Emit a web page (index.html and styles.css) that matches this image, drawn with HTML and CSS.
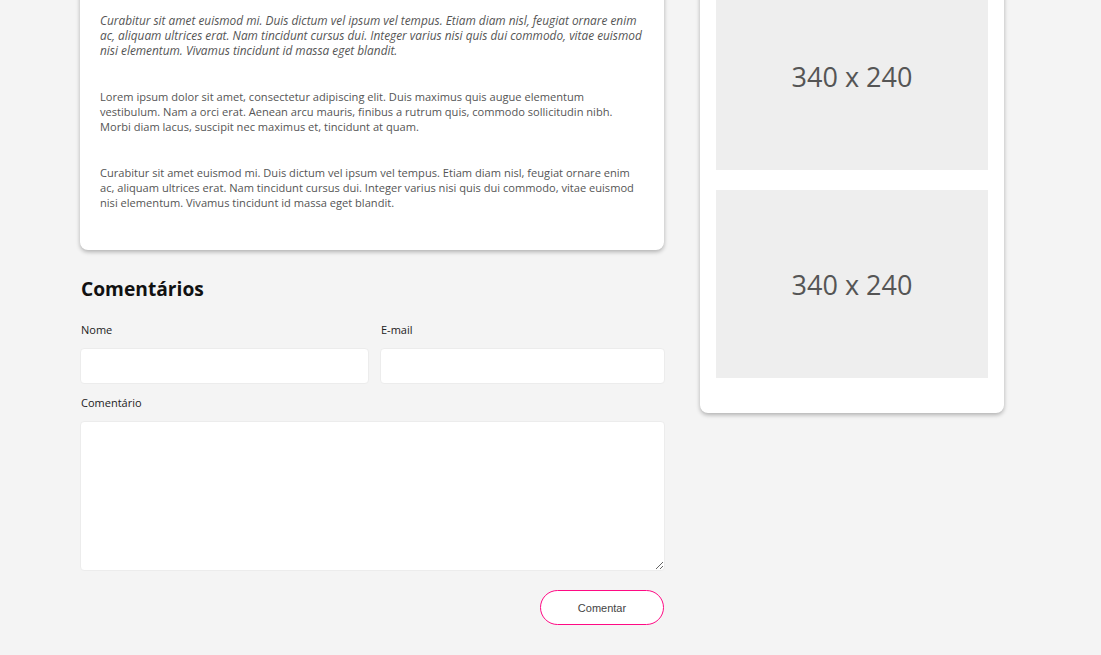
FILE: index.html
```html
<!DOCTYPE html>
<html lang="pt-BR">
<head>
<meta charset="utf-8">
<title>Post</title>
<link rel="stylesheet" href="styles.css">
</head>
<body>
<div class="page">
  <main class="main">
    <article class="card post">
      <p class="italic">Curabitur sit amet euismod mi. Duis dictum vel ipsum vel tempus. Etiam diam nisl, feugiat ornare enim ac, aliquam ultrices erat. Nam tincidunt cursus dui. Integer varius nisi quis dui commodo, vitae euismod nisi elementum. Vivamus tincidunt id massa eget blandit.</p>
      <p>Lorem ipsum dolor sit amet, consectetur adipiscing elit. Duis maximus quis augue elementum vestibulum. Nam a orci erat. Aenean arcu mauris, finibus a rutrum quis, commodo sollicitudin nibh. Morbi diam lacus, suscipit nec maximus et, tincidunt at quam.</p>
      <p>Curabitur sit amet euismod mi. Duis dictum vel ipsum vel tempus. Etiam diam nisl, feugiat ornare enim ac, aliquam ultrices erat. Nam tincidunt cursus dui. Integer varius nisi quis dui commodo, vitae euismod nisi elementum. Vivamus tincidunt id massa eget blandit.</p>
    </article>
    <section class="comments">
      <h2 class="comments-title">Comentários</h2>
      <form class="form">
        <div class="row">
          <label class="field">
            <span class="label">Nome</span>
            <input class="input" type="text">
          </label>
          <label class="field">
            <span class="label">E-mail</span>
            <input class="input" type="email">
          </label>
        </div>
        <label class="field">
          <span class="label">Comentário</span>
          <textarea class="input textarea"></textarea>
        </label>
        <div class="actions">
          <button class="btn" type="button">Comentar</button>
        </div>
      </form>
    </section>
  </main>
  <aside class="side">
    <div class="card ads">
      <div class="ph">340 x 240</div>
      <div class="ph">340 x 240</div>
    </div>
  </aside>
</div>
</body>
</html>
```
FILE: styles.css
```css
* { box-sizing: border-box; }
html, body { margin: 0; padding: 0; }
body {
  background: #f4f4f4;
  font-family: "Open Sans", "Liberation Sans", sans-serif;
  color: #555;
  overflow: hidden;
}
.page {
  display: flex;
  align-items: flex-start;
  gap: 35px;
  padding-left: 80px;
  margin-top: -60px;
}
.main {
  width: 585px;
  display: flex;
  flex-direction: column;
}
.card {
  background: #fff;
  border-radius: 8px;
  box-shadow: 0 2px 4px rgba(0,0,0,0.28);
}
.post {
  width: 584px;
  padding: 73px 20px 40px 20px;
  display: flex;
  flex-direction: column;
  gap: 31px;
}
.post p {
  margin: 0;
  font-size: 11.1px;
  line-height: 15px;
  color: #555;
}
.post .italic {
  font-style: italic;
  font-size: 11.85px;
}
.comments { padding-top: 25px; }
.comments-title {
  margin: 0 0 20px 1px;
  font-size: 19.2px;
  line-height: 27px;
  font-weight: 700;
  color: #111;
}
.form {
  display: flex;
  flex-direction: column;
  gap: 11px;
}
.row {
  display: grid;
  grid-template-columns: 289px 285px;
  gap: 11px;
}
.field {
  display: flex;
  flex-direction: column;
}
.label {
  font-size: 11px;
  line-height: 15px;
  color: #222;
  margin: 0 0 11px 1px;
}
.input {
  height: 36px;
  border: 1px solid #ececec;
  border-radius: 4px;
  background: #fff;
  font-family: inherit;
  font-size: 12px;
  padding: 6px 10px;
  outline: none;
}
.textarea {
  height: 150px;
  resize: vertical;
}
.actions {
  display: flex;
  justify-content: flex-end;
  padding-top: 8px;
  padding-right: 1px;
}
.btn {
  width: 124px;
  height: 35px;
  border: 1px solid #ff0a84;
  border-radius: 18px;
  background: #fff;
  font-family: "Liberation Sans", Arial, sans-serif;
  font-size: 11px;
  color: #444;
  cursor: pointer;
}
.side {
  width: 304px;
  padding-top: 26px;
}
.ads {
  padding: 16px 16px 35px 16px;
  display: flex;
  flex-direction: column;
  gap: 20px;
}
.ph {
  height: 188px;
  background: #eeeeee;
  display: flex;
  align-items: center;
  justify-content: center;
  font-size: 27px;
  color: #555;
}
```
